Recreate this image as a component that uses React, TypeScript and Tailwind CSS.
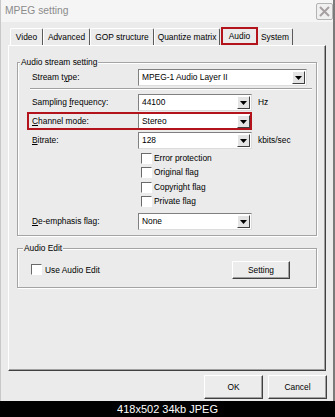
import React from 'react';

const font = { fontFamily: '"Liberation Sans", Arial, sans-serif' };

const DropArrow: React.FC = () => (
  <div className="flex h-[13px] w-[13px] items-center justify-center border border-white border-r-[#404040] border-b-[#404040] bg-[#e4e4e4]">
    <svg width="7" height="4" viewBox="0 0 7 4">
      <path d="M0 0h7L3.5 4z" fill="#000" />
    </svg>
  </div>
);

const Combo: React.FC<{ value: string; width: string }> = ({ value, width }) => (
  <div
    className={`flex h-[17px] items-center border border-[#808080] border-r-[#dcdcdc] border-b-[#dcdcdc] bg-white pr-[1px] ${width}`}
  >
    <span className="flex-1 pl-[3px] leading-none">{value}</span>
    <DropArrow />
  </div>
);

const Check: React.FC<{ label: string }> = ({ label }) => (
  <div className="flex h-[14.5px] items-center gap-[2px] pl-[123px]">
    <div className="h-[11px] w-[11px] border border-[#6a6a6a] border-r-white border-b-white bg-white" />
    <span>{label}</span>
  </div>
);

const Row: React.FC<{ label: React.ReactNode; children: React.ReactNode }> = ({ label, children }) => (
  <div className="flex h-[19px] items-center pl-[14px]">
    <span className="w-[106px]">{label}</span>
    {children}
  </div>
);

const tabs = [
  { name: 'Video', w: 'w-[33px]' },
  { name: 'Advanced', w: 'w-[47px]' },
  { name: 'GOP structure', w: 'w-[64px]' },
  { name: 'Quantize matrix', w: 'w-[66px]' },
];

const Btn: React.FC<{ label: string; className: string }> = ({ label, className }) => (
  <button
    className={`flex items-center justify-center border border-white border-r-[#404040] border-b-[#404040] bg-[#ececec] shadow-[inset_-1px_-1px_0_#a0a0a0] ${className}`}
  >
    {label}
  </button>
);

const App: React.FC = () => {
  return (
    <div className="flex h-[417px] w-[335px] flex-col bg-black text-[8.4px] text-black" style={font}>
      <div className="flex h-[401px] flex-col border-l border-r-2 border-[#c8c8c8] border-r-[#7a7a7a] bg-[#ebebeb]">
        {/* title bar */}
        <div className="flex h-[22px] items-center justify-between bg-[#f5f5f5] pl-[4px]">
          <span className="text-[10.3px] text-[#8c8c8c]">MPEG setting</span>
          <div className="flex h-[17px] w-[17px] items-center justify-center rounded-[2px] border border-[#b4b4b4] bg-[#f0f0f0]">
            <svg width="11" height="11" viewBox="0 0 11 11">
              <path d="M1 1l9 9M10 1l-9 9" stroke="#a8a0a0" strokeWidth="2" />
            </svg>
          </div>
        </div>

        <div className="flex flex-1 flex-col pl-[7px]">
          {/* tabs */}
          <div className="mt-[5px] flex h-[18px] items-end pl-[2px]">
            {tabs.map((t) => (
              <div
                key={t.name}
                className={`flex h-[17px] items-center justify-center rounded-t-[2px] border-t border-l border-r border-white border-r-[#5a5a5a] ${t.w}`}
              >
                {t.name}
              </div>
            ))}
            <div className="relative z-10 -mb-[1px] ml-[1px] flex h-[19px] w-[37px] items-center justify-center bg-[#ebebeb]">
              Audio
              <div className="absolute inset-x-0 top-0 h-[18px] border-2 border-[#b3141c]" />
            </div>
            <div className="flex h-[17px] w-[35px] items-center justify-center rounded-t-[2px] border-t border-r border-white border-r-[#5a5a5a]">
              System
            </div>
          </div>

          {/* panel */}
          <div className="flex h-[326px] w-[318px] flex-col border border-white border-r-[#404040] border-b-[#404040] px-[8px] pt-[11px] shadow-[inset_-1px_-1px_0_#a0a0a0]">
            <fieldset className="flex flex-col border border-[#a4a4a4] pb-[4px] shadow-[1px_1px_0_#fff,inset_1px_1px_0_#fff]">
              <legend className="ml-[2px] bg-[#ebebeb] px-[1px] leading-[11px]">Audio stream setting</legend>
              <Row label={<>Stream t<u>y</u>pe:</>}>
                <Combo value="MPEG-1 Audio Layer II" width="w-[169px]" />
              </Row>
              <div className="mt-[1px] ml-[12px] h-[2px] w-[282px] border-t border-b border-[#a0a0a0] border-b-white" />
              <div className="mt-[3px]">
                <Row label={<>Sampling <u>f</u>requency:</>}>
                  <Combo value="44100" width="w-[114px]" />
                  <span className="ml-[6px]">Hz</span>
                </Row>
              </div>
              <div className="relative">
                <Row label={<><u>C</u>hannel mode:</>}>
                  <Combo value="Stereo" width="w-[114px]" />
                </Row>
                <div className="absolute top-0 left-[9px] h-[18px] w-[225px] border-2 border-[#b3141c]" />
              </div>
              <Row label={<><u>B</u>itrate:</>}>
                <Combo value="128" width="w-[114px]" />
                <span className="ml-[6px]">kbits/sec</span>
              </Row>
              <div className="mt-[1px] flex flex-col">
                <Check label="Error protection" />
                <Check label="Original flag" />
                <Check label="Copyright flag" />
                <Check label="Private flag" />
              </div>
              <div className="mt-[3px]">
                <Row label={<><u>D</u>e-emphasis flag:</>}>
                  <Combo value="None" width="w-[114px]" />
                </Row>
              </div>
            </fieldset>

            <fieldset className="mt-[6.5px] flex flex-col border border-[#a4a4a4] pt-[7.5px] pb-[8px] shadow-[1px_1px_0_#fff,inset_1px_1px_0_#fff]">
              <legend className="ml-[5px] bg-[#ebebeb] px-[1px] leading-[11px]">Audio Edit</legend>
              <div className="flex h-[18px] items-center justify-between pr-[26px] pl-[13px]">
                <div className="flex items-center gap-[3px]">
                  <div className="h-[11px] w-[11px] border border-[#6a6a6a] border-r-white border-b-white bg-white" />
                  <span>Use Audio Edit</span>
                </div>
                <Btn label="Setting" className="h-[18px] w-[58px]" />
              </div>
            </fieldset>
          </div>

          {/* buttons */}
          <div className="mt-[4px] flex justify-end gap-[5px] pr-[6px]">
            <Btn label="OK" className="h-[24px] w-[59px]" />
            <Btn label="Cancel" className="h-[24px] w-[59px]" />
          </div>
        </div>
      </div>
      <div className="flex flex-1 items-center justify-center text-[11px] text-white">418x502 34kb JPEG</div>
    </div>
  );
};

export default App;
